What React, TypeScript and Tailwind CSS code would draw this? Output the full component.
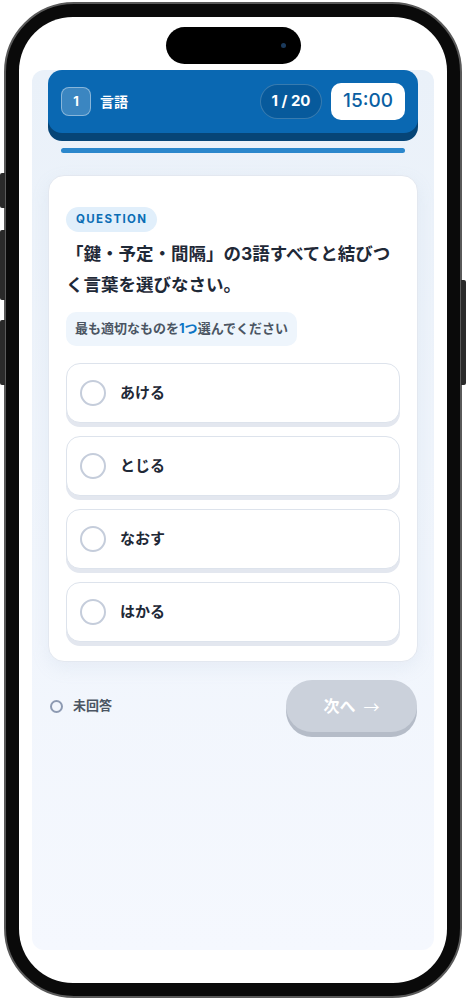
import React from 'react';

const options = ['あける', 'とじる', 'なおす', 'はかる'];

const font = { fontFamily: 'Inter, "Noto Sans CJK JP", sans-serif' };

const App: React.FC = () => {
  return (
    <div className="relative w-[466px] h-[1000px] bg-white px-[4px] py-[2px]" style={font}>
      {/* side buttons */}
      <div className="absolute left-0 top-[173px] w-[5px] h-[35px] rounded-l-[2px] bg-[#2a2a2a]" />
      <div className="absolute left-0 top-[230px] w-[5px] h-[70px] rounded-l-[2px] bg-[#2a2a2a]" />
      <div className="absolute left-0 top-[320px] w-[5px] h-[65px] rounded-l-[2px] bg-[#2a2a2a]" />
      <div className="absolute right-0 top-[280px] w-[5px] h-[105px] rounded-r-[2px] bg-[#2a2a2a]" />

      <div className="h-[996px] rounded-[70px] border-[2px] border-[#5a5a5a] bg-[#0a0a0a] p-[13px]">
        <div className="flex h-full flex-col rounded-[54px] bg-white">
          {/* dynamic island */}
          <div className="mx-auto mt-[10px] flex h-[37px] w-[135px] items-center justify-end rounded-full bg-black pr-[15px]">
            <div className="h-[5px] w-[5px] rounded-full bg-[#1b3a5c]" />
          </div>

          <div className="mx-[13px] mt-[6px] h-[880px] rounded-[12px] bg-gradient-to-b from-[#eaf1f9] to-[#f5f8fe] px-[16px]">
            {/* header */}
            <div className="flex h-[63px] items-center rounded-[14px] bg-[#0a68b2] px-[13px] shadow-[0_8px_0_#064577]">
              <div className="flex h-[29px] w-[30px] items-center justify-center rounded-[8px] border border-white/40 bg-white/20 text-[13px] font-bold text-white">
                1
              </div>
              <span className="ml-[9px] text-[14px] font-bold text-white">言語</span>
              <div className="ml-auto flex h-[35px] w-[62px] items-center justify-center rounded-full border border-white/20 bg-[#075a9c] text-[15px] font-bold text-white">
                1 / 20
              </div>
              <div className="ml-[9px] flex h-[37px] w-[74px] items-center justify-center rounded-[10px] bg-white text-[19px] font-medium text-[#0a5fa3]">
                15:00
              </div>
            </div>

            {/* progress */}
            <div className="mx-[13px] mt-[15px] h-[5px] rounded-full bg-[#2b87cc]" />

            {/* card */}
            <div className="mt-[22px] rounded-[16px] border border-[#e3e8f0] bg-white px-[17px] pb-[19px] pt-[29px] shadow-[0_6px_18px_rgba(150,170,200,0.12)]">
              <div className="inline-flex h-[25px] items-center rounded-full bg-[#e1effb] px-[10px] text-[11.5px] font-bold tracking-[0.12em] text-[#0b6db5]">
                QUESTION
              </div>
              <p className="mt-[6px] text-[17.5px] font-bold leading-[31px] text-[#1f2937]">
                「鍵・予定・間隔」の3語すべてと結びつく言葉を選びなさい。
              </p>
              <div className="mt-[12px] inline-flex h-[34px] items-center rounded-[10px] bg-[#eef5fc] px-[9px] text-[13px] font-semibold text-[#4b5563]">
                最も適切なものを<span className="font-bold text-[#0b74c4]">1つ</span>選んでください
              </div>

              <div className="mt-[17px] flex flex-col gap-[13px]">
                {options.map((o) => (
                  <div
                    key={o}
                    className="flex h-[60px] items-center rounded-[14px] border border-[#dde3ec] bg-white pl-[13px] shadow-[0_4px_0_#e3e7ef]"
                  >
                    <div className="h-[26px] w-[26px] rounded-full border-2 border-[#c5cddb]" />
                    <span className="ml-[14px] text-[15px] font-bold text-[#1f2937]">{o}</span>
                  </div>
                ))}
              </div>
            </div>

            {/* footer */}
            <div className="mt-[18px] flex items-center justify-between pl-[2px] pr-[1px]">
              <div className="flex items-center">
                <div className="h-[13px] w-[13px] rounded-full border-[2.5px] border-[#8d9ab2]" />
                <span className="ml-[10px] text-[13px] font-bold text-[#4b5563]">未回答</span>
              </div>
              <div className="flex h-[52px] w-[131px] items-center justify-center gap-[8px] rounded-full bg-[#cbd1db] text-[16px] font-bold text-white shadow-[0_5px_0_#b5bcc8]">
                <span>次へ</span>
                <span style={{ fontFamily: '"Noto Sans CJK JP", sans-serif' }} className="font-normal">→</span>
              </div>
            </div>
          </div>
        </div>
      </div>
    </div>
  );
};

export default App;
